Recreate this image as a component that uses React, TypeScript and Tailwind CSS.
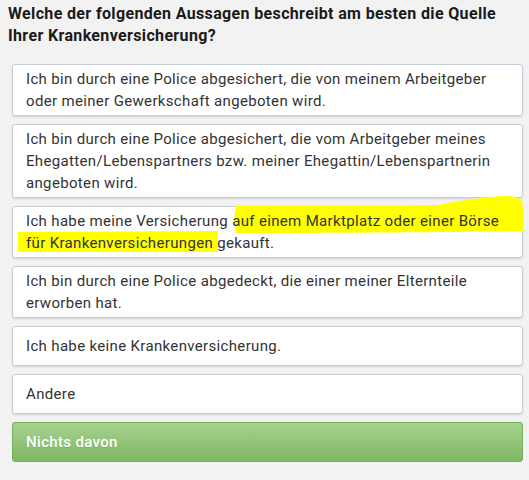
import React from "react";

const options: React.ReactNode[] = [
  <>
    Ich bin durch eine Police abgesichert, die von meinem Arbeitgeber
    <br />
    oder meiner Gewerkschaft angeboten wird.
  </>,
  <>
    Ich bin durch eine Police abgesichert, die vom Arbeitgeber meines
    <br />
    Ehegatten/Lebenspartners bzw. meiner Ehegattin/Lebenspartnerin
    <br />
    angeboten wird.
  </>,
  "marked",
  <>
    Ich bin durch eine Police abgedeckt, die einer meiner Elternteile
    <br />
    erworben hat.
  </>,
  "Ich habe keine Krankenversicherung.",
  "Andere",
];

function Highlight() {
  // yellow marker strokes drawn over the third answer
  return (
    <svg
      className="absolute left-0 top-0 pointer-events-none overflow-visible"
      width="511"
      height="52"
      viewBox="0 0 511 52"
      fill="#ffff00"
    >
      <path d="M223 -1 C290 -2 380 -1 425 -2 C445 -6 468 -10 492 -11 C500 -11 506 -9 509 -6 L510 3 L510 24 C440 25 320 26 223 26 L221 12 Z" />
      <path d="M5 25 L205 24 L205 45 L5 45 Z" />
    </svg>
  );
}

export default function App() {
  return (
    <div className="w-[529px] h-[480px] bg-[#f2f2f2] overflow-hidden" style={{ fontFamily: "Roboto, sans-serif" }}>
      <h1 className="pt-[3px] pl-[8px] text-[16px] tracking-[0.35px] leading-[22px] font-bold text-[#1a1a1a]">
        Welche der folgenden Aussagen beschreibt am besten die Quelle
        <br />
        Ihrer Krankenversicherung?
      </h1>

      <div className="ml-[12px] w-[511px] mt-[17px] flex flex-col gap-[8px]">
        {options.map((o, i) => (
          <div
            key={i}
            className="relative min-h-[40px] flex items-center bg-white border border-[#c8ced9] rounded-[3px] shadow-[0_1px_2px_rgba(60,70,90,0.18)] pl-[13px] pr-[13px] py-[3px] text-[15px] tracking-[0.34px] leading-[22px] text-[#333333] whitespace-nowrap"
          >
            {o === "marked" ? (
              <>
                <Highlight />
                <span className="relative">
                  Ich habe meine Versicherung auf einem Marktplatz oder einer Börse
                  <br />
                  für Krankenversicherungen gekauft.
                </span>
              </>
            ) : (
              <span>{o}</span>
            )}
          </div>
        ))}

        <div className="h-[40px] flex items-center rounded-[3px] border border-[#74b05a] bg-gradient-to-b from-[#a6d191] to-[#7db862] pl-[13px] text-[15px] tracking-[0.34px] font-medium text-white [text-shadow:0_1px_1px_rgba(0,0,0,0.1)]">
          Nichts davon
        </div>
      </div>
    </div>
  );
}
